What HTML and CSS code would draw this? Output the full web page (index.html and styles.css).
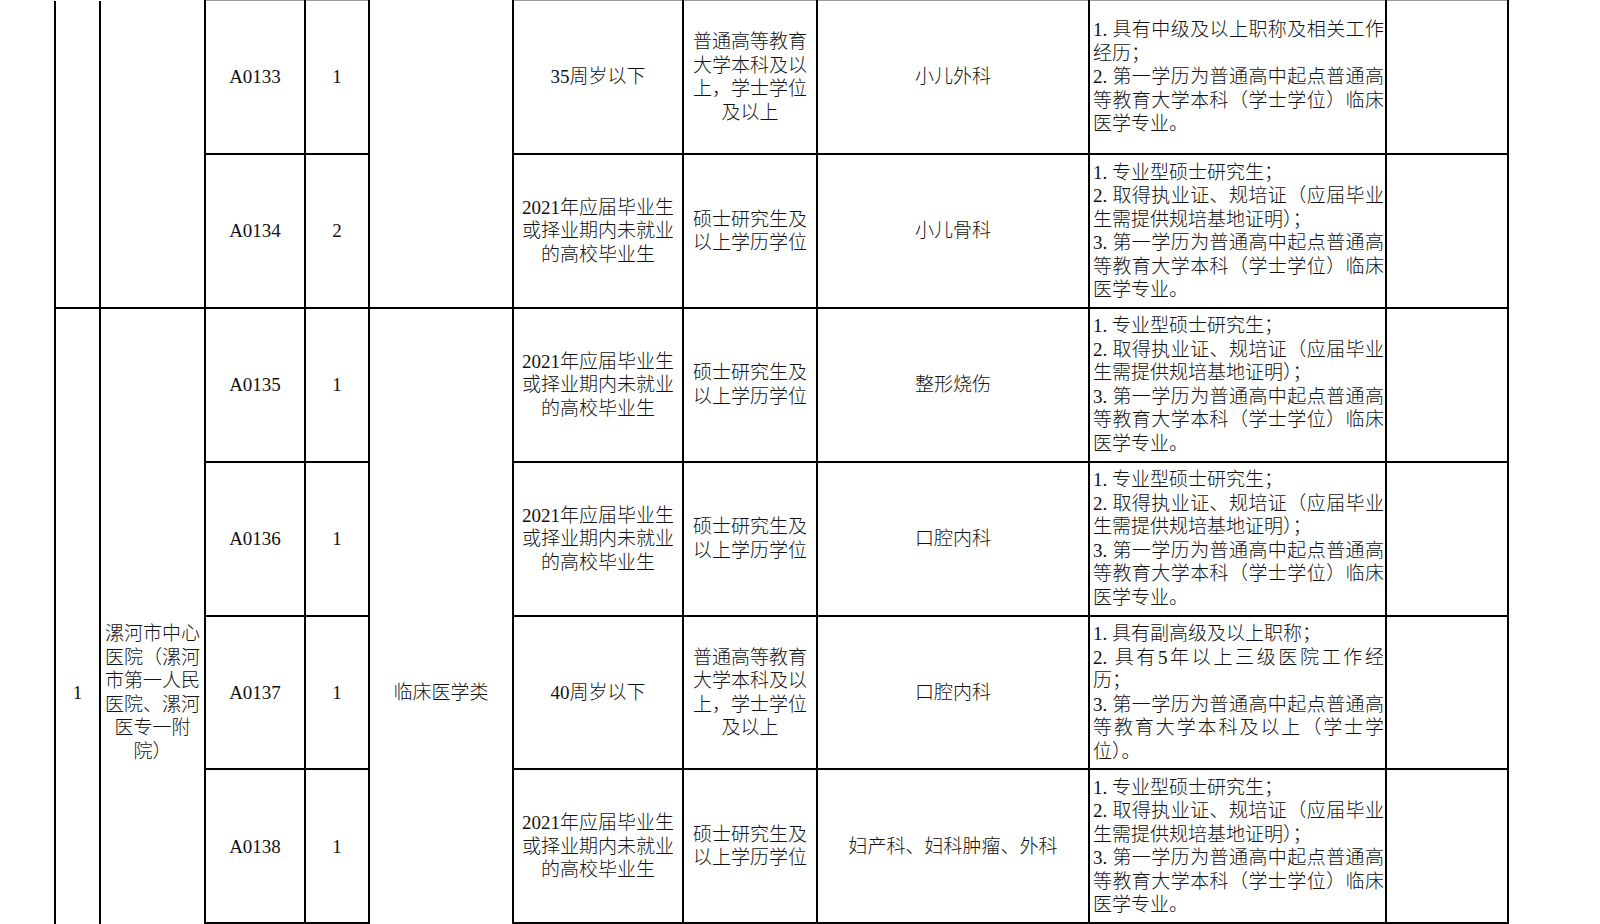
FILE: index.html
```html
<!DOCTYPE html>
<html lang="zh-CN">
<head>
<meta charset="utf-8">
<title>岗位表</title>
<link rel="stylesheet" href="styles.css">
</head>
<body>
<table class="grid">
  <colgroup>
    <col class="c-no"><col class="c-unit"><col class="c-code"><col class="c-num"><col class="c-cat">
    <col class="c-age"><col class="c-edu"><col class="c-major"><col class="c-req"><col class="c-note">
  </colgroup>
  <tbody>
    <tr class="row first">
      <td rowspan="2" class="cont"></td>
      <td rowspan="2" class="cont"></td>
      <td class="code">A0133</td>
      <td class="num">1</td>
      <td rowspan="2" class="cont"></td>
      <td class="ctr">35周岁以下</td>
      <td class="ctr">普通高等教育<br>大学本科及以<br>上，学士学位<br>及以上</td>
      <td class="ctr">小儿外科</td>
      <td class="req"><span class="ln jl">1. 具有中级及以上职称及相关工作</span><span class="ln">经历；</span><span class="ln jl">2. 第一学历为普通高中起点普通高</span><span class="ln jl">等教育大学本科（学士学位）临床</span><span class="ln">医学专业。</span></td>
      <td class="note"></td>
    </tr>
    <tr class="row">
      <td class="code">A0134</td>
      <td class="num">2</td>
      <td class="ctr">2021年应届毕业生<br>或择业期内未就业<br>的高校毕业生</td>
      <td class="ctr">硕士研究生及<br>以上学历学位</td>
      <td class="ctr">小儿骨科</td>
      <td class="req"><span class="ln">1. 专业型硕士研究生；</span><span class="ln jl">2. 取得执业证、规培证（应届毕业</span><span class="ln">生需提供规培基地证明）；</span><span class="ln jl">3. 第一学历为普通高中起点普通高</span><span class="ln jl">等教育大学本科（学士学位）临床</span><span class="ln">医学专业。</span></td>
      <td class="note"></td>
    </tr>
    <tr class="row">
      <td rowspan="5" class="ctr">1</td>
      <td rowspan="5" class="ctr unit">漯河市中心<br>医院（漯河<br>市第一人民<br>医院、漯河<br>医专一附<br>院）</td>
      <td class="code">A0135</td>
      <td class="num">1</td>
      <td rowspan="5" class="ctr">临床医学类</td>
      <td class="ctr">2021年应届毕业生<br>或择业期内未就业<br>的高校毕业生</td>
      <td class="ctr">硕士研究生及<br>以上学历学位</td>
      <td class="ctr">整形烧伤</td>
      <td class="req"><span class="ln">1. 专业型硕士研究生；</span><span class="ln jl">2. 取得执业证、规培证（应届毕业</span><span class="ln">生需提供规培基地证明）；</span><span class="ln jl">3. 第一学历为普通高中起点普通高</span><span class="ln jl">等教育大学本科（学士学位）临床</span><span class="ln">医学专业。</span></td>
      <td class="note"></td>
    </tr>
    <tr class="row">
      <td class="code">A0136</td>
      <td class="num">1</td>
      <td class="ctr">2021年应届毕业生<br>或择业期内未就业<br>的高校毕业生</td>
      <td class="ctr">硕士研究生及<br>以上学历学位</td>
      <td class="ctr">口腔内科</td>
      <td class="req"><span class="ln">1. 专业型硕士研究生；</span><span class="ln jl">2. 取得执业证、规培证（应届毕业</span><span class="ln">生需提供规培基地证明）；</span><span class="ln jl">3. 第一学历为普通高中起点普通高</span><span class="ln jl">等教育大学本科（学士学位）临床</span><span class="ln">医学专业。</span></td>
      <td class="note"></td>
    </tr>
    <tr class="row">
      <td class="code">A0137</td>
      <td class="num">1</td>
      <td class="ctr">40周岁以下</td>
      <td class="ctr">普通高等教育<br>大学本科及以<br>上，学士学位<br>及以上</td>
      <td class="ctr">口腔内科</td>
      <td class="req"><span class="ln">1. 具有副高级及以上职称；</span><span class="ln jl">2. 具有5年以上三级医院工作经</span><span class="ln">历；</span><span class="ln jl">3. 第一学历为普通高中起点普通高</span><span class="ln jl">等教育大学本科及以上（学士学</span><span class="ln">位）。</span></td>
      <td class="note"></td>
    </tr>
    <tr class="row">
      <td class="code">A0138</td>
      <td class="num">1</td>
      <td class="ctr">2021年应届毕业生<br>或择业期内未就业<br>的高校毕业生</td>
      <td class="ctr">硕士研究生及<br>以上学历学位</td>
      <td class="ctr">妇产科、妇科肿瘤、外科</td>
      <td class="req"><span class="ln">1. 专业型硕士研究生；</span><span class="ln jl">2. 取得执业证、规培证（应届毕业</span><span class="ln">生需提供规培基地证明）；</span><span class="ln jl">3. 第一学历为普通高中起点普通高</span><span class="ln jl">等教育大学本科（学士学位）临床</span><span class="ln">医学专业。</span></td>
      <td class="note"></td>
    </tr>
    <tr class="row">
      <td class="code"></td>
      <td class="num"></td>
      <td class="ctr"></td>
      <td class="ctr"></td>
      <td class="ctr"></td>
      <td class="req"></td>
      <td class="note"></td>
    </tr>
  </tbody>
</table>
</body>
</html>
```

FILE: styles.css
```css
html, body {
  margin: 0;
  padding: 0;
  background: #ffffff;
  overflow: hidden;
}

body {
  width: 1600px;
  height: 924px;
  font-family: "Liberation Serif", "Noto Sans CJK SC", serif;
  color: #111111;
}

.grid {
  margin: 0 0 0 54px;
  width: 1453px;
  table-layout: fixed;
  border-collapse: collapse;
  border: none;
  font-size: 19px;
  line-height: 23.5px;
  font-weight: 300;
}

.c-no { width: 45px; }
.c-unit { width: 105px; }
.c-code { width: 100px; }
.c-num { width: 64px; }
.c-cat { width: 144px; }
.c-age { width: 170px; }
.c-edu { width: 134px; }
.c-major { width: 272px; }
.c-req { width: 297px; }
.c-note { width: 122px; }

.row {
  height: 153.8px;
}

.grid td {
  border: 2px solid #000000;
  padding: 0 2px;
  vertical-align: middle;
  text-align: center;
  overflow: hidden;
}

.first td {
  border-top: 1px solid #9a9a9a;
}

.first td.cont {
  border-top: none;
}

.grid td.unit {
  padding: 0 3px;
}

.grid td.req {
  padding: 0 1px 0 3px;
  text-align: left;
}

.ln {
  display: block;
  white-space: nowrap;
  text-align: left;
}

.ln.jl {
  text-align: justify;
  text-align-last: justify;
  white-space: normal;
}
```
